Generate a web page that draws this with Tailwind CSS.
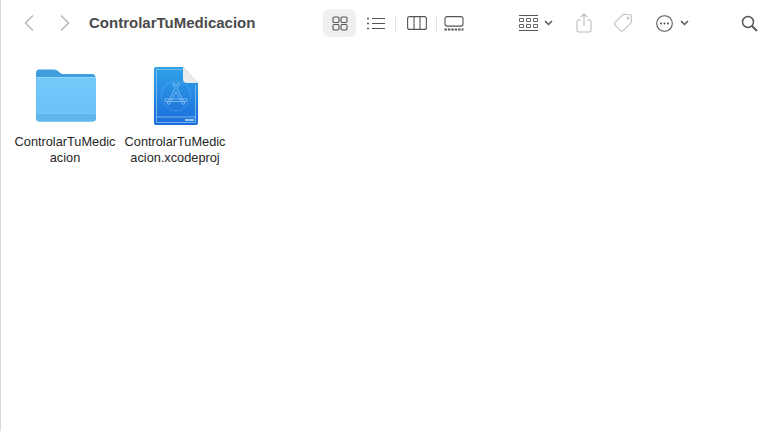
<!DOCTYPE html>
<html lang="en">
<head>
    <meta charset="UTF-8">
    <title>ControlarTuMedicacion</title>
    <script src="https://cdn.jsdelivr.net/npm/@tailwindcss/browser@4"></script>
</head>
<body class="bg-white w-[771px] h-[431px] overflow-hidden font-['Inter','Liberation_Sans',sans-serif]">
    <div class="h-[431px] border-l border-[#d9d9d9] flex flex-col">
        <!-- Toolbar -->
        <header class="h-[46px] flex items-center text-[#5c5c5c]">
            <svg class="ml-[22px] w-[12px] h-[18px]" viewBox="0 0 12 18" fill="none" stroke="#b8b8b8" stroke-width="1.5"><path d="M10 1.500 2.500 9l7.500 7.500"/></svg>
            <svg class="ml-[24px] w-[12px] h-[18px]" viewBox="0 0 12 18" fill="none" stroke="#b8b8b8" stroke-width="1.5"><path d="M2 1.500 9.500 9 2 16.500"/></svg>
            <h1 class="ml-[18px] w-[234px] text-[15px] font-semibold text-[#4a4a4a] font-['Liberation_Sans',sans-serif] whitespace-nowrap">ControlarTuMedicacion</h1>
            <div class="w-[33px] h-[28px] rounded-md bg-[#f0f0f0] flex items-center justify-center">
                <svg width="16" height="15" viewBox="0 0 16 15" fill="none" stroke="#555" stroke-width="1.100"><rect x="1" y="1" width="6" height="5.500" rx="1.200"/><rect x="9" y="1" width="6" height="5.500" rx="1.200"/><rect x="1" y="8.500" width="6" height="5.500" rx="1.200"/><rect x="9" y="8.500" width="6" height="5.500" rx="1.200"/></svg>
            </div>
            <svg class="ml-[11px]" width="18" height="13" viewBox="0 0 18 13" fill="none" stroke="#555" stroke-width="1.100"><path d="M5 1.500h13M5 6.500h13M5 11.500h13"/><path d="M0 1.500h2M0 6.500h2M0 11.500h2" stroke-width="1.500"/></svg>
            <div class="ml-[10px] w-px h-[17px] bg-[#e6e6e6]"></div>
            <svg class="ml-[11px]" width="20" height="14" viewBox="0 0 20 14" fill="none" stroke="#555" stroke-width="1.100"><rect x="0.600" y="0.600" width="18.800" height="12.800" rx="2"/><path d="M7 1v12M13 1v12"/></svg>
            <div class="ml-[9px] w-px h-[17px] bg-[#e6e6e6]"></div>
            <svg class="ml-[7px]" width="20" height="15" viewBox="0 0 20 15" fill="none" stroke="#555" stroke-width="1.100"><rect x="1" y="0.600" width="18" height="9.500" rx="2"/><path d="M0.500 13.500h19" stroke-width="2" stroke-dasharray="2.400 1"/></svg>
            <svg class="ml-[55px]" width="19" height="16" viewBox="0 0 19 16" fill="none" stroke="#555"><path d="M0 0.500h19M0 15.500h19" stroke-width="1"/><path d="M0.500 3.500h4v3h-4zM7.500 3.500h4v3h-4zM14.500 3.500h4v3h-4zM0.500 9.500h4v3h-4zM7.500 9.500h4v3h-4zM14.500 9.500h4v3h-4z" stroke-width="0.900"/></svg>
            <svg class="ml-[6px]" width="9" height="6" viewBox="0 0 9 6" fill="none" stroke="#555" stroke-width="1.500"><path d="M1 1l3.500 3.500L8 1"/></svg>
            <svg class="ml-[23px]" width="16" height="20" viewBox="0 0 16 20" fill="none" stroke="#bdbdbd" stroke-width="1.100"><path d="M5 7H2.500A1.500 1.500 0 0 0 1 8.500v9A1.500 1.500 0 0 0 2.500 19h11a1.500 1.500 0 0 0 1.500-1.500v-9A1.500 1.500 0 0 0 13.500 7H11M8 13V1M4.800 4 8 1l3.200 3"/></svg>
            <svg class="ml-[21px]" width="20" height="20" viewBox="0 0 20 20" fill="none" stroke="#c4c4c4" stroke-width="1.200"><path d="M11.500 1.500h5.500a1.500 1.500 0 0 1 1.500 1.500v5.500a2 2 0 0 1-.6 1.400l-8 8a1.500 1.500 0 0 1-2.100 0l-6-6a1.500 1.500 0 0 1 0-2.100l8-8a2 2 0 0 1 1.400-.6z"/><circle cx="15" cy="5" r="1"/></svg>
            <svg class="ml-[23px]" width="17" height="17" viewBox="0 0 17 17" fill="none" stroke="#555" stroke-width="1.100"><circle cx="8.500" cy="8.500" r="7.800"/><circle cx="5" cy="8.500" r="0.500" fill="#555"/><circle cx="8.500" cy="8.500" r="0.500" fill="#555"/><circle cx="12" cy="8.500" r="0.500" fill="#555"/></svg>
            <svg class="ml-[7px]" width="9" height="6" viewBox="0 0 9 6" fill="none" stroke="#555" stroke-width="1.500"><path d="M1 1l3.500 3.500L8 1"/></svg>
            <svg class="ml-[52px]" width="17" height="17" viewBox="0 0 17 17" fill="none" stroke="#555" stroke-width="1.500"><circle cx="7" cy="7" r="5.500"/><path d="M11 11l5 5" stroke-width="1.900"/></svg>
        </header>
        <!-- Icon grid -->
        <main class="flex pt-[21px] pl-[14px] gap-[10px]">
            <div class="w-[100px] flex flex-col items-center">
                <svg width="62" height="56" viewBox="0 0 62 56" class="ml-[2px]">
                    <defs>
                        <linearGradient id="folderBody" x1="0" y1="0" x2="0" y2="1"><stop offset="0" stop-color="#74cbfa"/><stop offset="1" stop-color="#68bff5"/></linearGradient>
                    </defs>
                    <path d="M1 6a3.500 3.500 0 0 1 3.500-3.500h14c2.500 0 3.500.7 5 2l1.500 1.300c1.200 1 2.200 1.200 3.700 1.200h28.300a3.500 3.500 0 0 1 3.500 3.500v5H1z" fill="#3f9fde"/>
                    <rect x="1" y="10" width="60" height="44.500" rx="3.500" fill="url(#folderBody)"/>
                    <rect x="1" y="10" width="60" height="1" fill="#93d8fb"/>
                    <path d="M1 46h60v5a3.500 3.500 0 0 1-3.500 3.500h-53A3.500 3.500 0 0 1 1 51z" fill="#5fb6ec"/>
                    <rect x="1" y="46" width="60" height="1" fill="#78c6f3"/>
                </svg>
                <p class="mt-[11px] text-[12.75px] leading-[16px] text-[#262626] text-center font-['Liberation_Sans',sans-serif] whitespace-nowrap">ControlarTuMedic<br>acion</p>
            </div>
            <div class="w-[100px] flex flex-col items-center">
                <svg width="46" height="60" viewBox="0 0 46 60" class="ml-[1px] -mt-[1px]">
                    <defs>
                        <linearGradient id="projBody" x1="0" y1="0" x2="0" y2="1"><stop offset="0" stop-color="#2ea2e8"/><stop offset="1" stop-color="#1b6cdb"/></linearGradient>
                    </defs>
                    <path d="M3 1h27l15 16v40a2 2 0 0 1-2 2H3a2 2 0 0 1-2-2V3a2 2 0 0 1 2-2z" fill="url(#projBody)"/>
                    <path d="M30 1l15 16H34a4 4 0 0 1-4-4z" fill="#ececec"/>
                    <g fill="none" stroke="#8cc4f1">
                        <path d="M3.500 3.500H29M3.500 3.500v53h39V19" stroke-width="0.800"/>
                        <path d="M3.500 51h39" stroke-width="0.800"/>
                        <circle cx="23" cy="30" r="15" stroke-width="0.600" opacity="0.500"/>
                        <path d="M21 17l2 3 2-3 1.500 1-2.500 4.500 8 15-2 1-7-13-7 13-2-1 8-15-2.500-4.500z" stroke-width="0.800"/>
                        <path d="M12 33h22v2.500H12z" stroke-width="0.800"/>
                    </g>
                    <rect x="32" y="53" width="9" height="2" fill="#9cc9f0"/>
                </svg>
                <p class="mt-[8px] text-[12.75px] leading-[16px] text-[#262626] text-center font-['Liberation_Sans',sans-serif] whitespace-nowrap">ControlarTuMedic<br>acion.xcodeproj</p>
            </div>
        </main>
    </div>
</body>
</html>
